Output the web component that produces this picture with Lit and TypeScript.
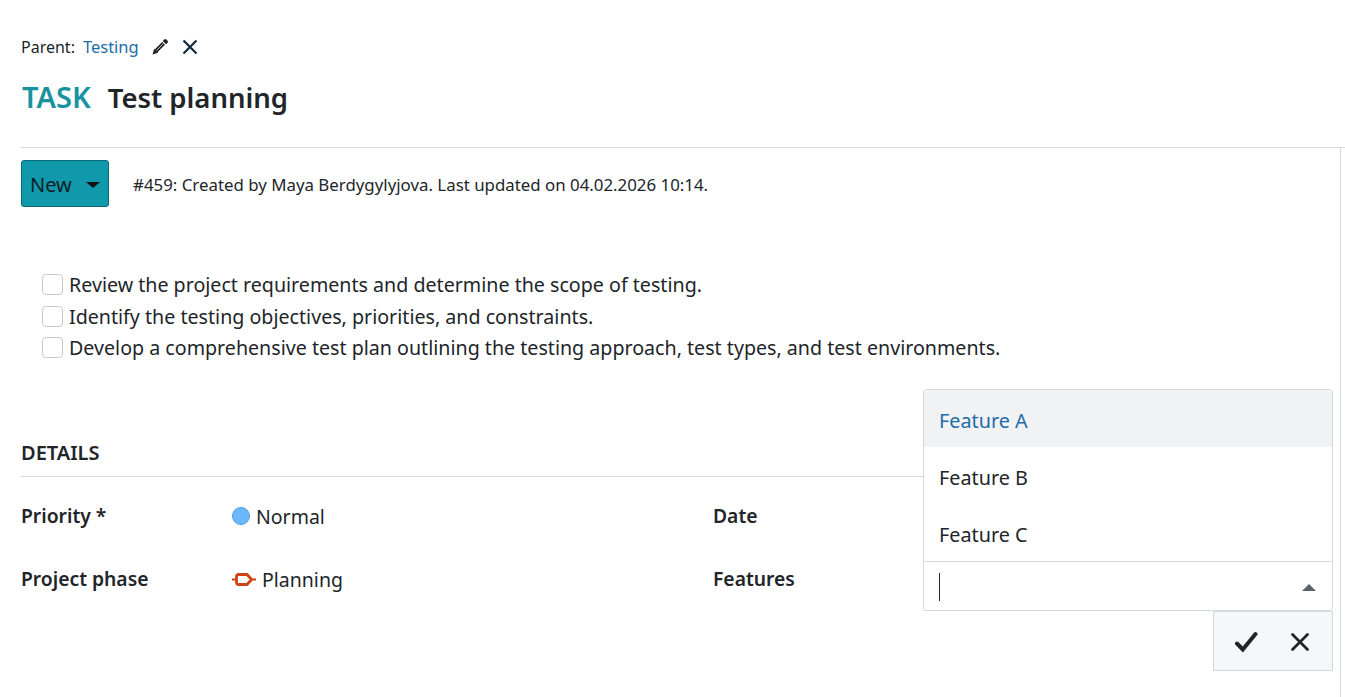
import { LitElement, css, html } from 'lit';
import { customElement } from 'lit/decorators.js';

const checklist = [
  'Review the project requirements and determine the scope of testing.',
  'Identify the testing objectives, priorities, and constraints.',
  'Develop a comprehensive test plan outlining the testing approach, test types, and test environments.',
];

const features = ['Feature A', 'Feature B', 'Feature C'];

@customElement('app-root')
export class AppRoot extends LitElement {
  render() {
    return html`
      <div class="header">
        <div class="parent">
          <span>Parent:</span>
          <a class="link">Testing</a>
          <svg class="pencil" viewBox="0 0 16 16" width="16" height="16">
            <path d="M12.200.5a1.500 1.500 0 0 1 2.100 0l1.200 1.200a1.500 1.500 0 0 1 0 2.100l-1.500 1.500-3.300-3.300zM9.900 2.800l3.300 3.300-8 8-4.700 1.400 1.400-4.700z" fill="#212529"/>
            <path d="M3 9.900 9.900 3M4.500 11.500 11.400 4.600M6 13 12.900 6.100" stroke="#e8eef4" stroke-width=".8" fill="none"/>
          </svg>
          <svg class="close" viewBox="0 0 16 16" width="16" height="16">
            <path d="M1.500 1.500 14.500 14.500M14.500 1.500 1.500 14.500" stroke="#0f2a3f" stroke-width="2.200" fill="none"/>
          </svg>
        </div>
        <h1><span class="type">TASK</span><span class="subject">Test planning</span></h1>
      </div>
      <div class="body">
        <div class="meta">
          <button class="status"><span class="status-text">New</span><span class="caret"></span></button>
          <span class="info">#459: Created by Maya Berdygylyjova. Last updated on 04.02.2026 10:14.</span>
        </div>
        <ul class="checklist">
          ${checklist.map((item) => html`<li><span class="box"></span>${item}</li>`)}
        </ul>
        <h2>DETAILS</h2>
        <div class="fields">
          <div class="label">Priority *</div>
          <div class="value">
            <span class="dot"></span>Normal
          </div>
          <div class="label">Date</div>
          <div></div>
          <div class="label">Project phase</div>
          <div class="value">
            <svg class="phase" viewBox="0 0 24 13" width="24" height="13">
              <path d="M0 6.500h4M20 6.500h4" stroke="#cf4113" stroke-width="2.200" fill="none"/>
              <path d="M6.500 1.500h8.500l4.500 5-4.500 5H6.500a2 2 0 0 1-2-2v-6a2 2 0 0 1 2-2z" stroke="#cf4113" stroke-width="2.800" fill="none" stroke-linejoin="round"/>
            </svg>
            Planning
          </div>
          <div class="label">Features</div>
          <div class="editor">
            <div class="menu">
              ${features.map(
                (f, i) => html`<div class="option ${i === 0 ? 'active' : ''}">${f}</div>`
              )}
            </div>
            <div class="input">
              <span class="cursor"></span>
              <span class="arrow"></span>
            </div>
            <div class="actions">
              <svg viewBox="0 0 24 22" width="24" height="22">
                <path d="M3 12.500 8.800 18.500 21.500 3" stroke="#212529" stroke-width="4" stroke-linecap="round" fill="none"/>
              </svg>
              <svg viewBox="0 0 20 20" width="20" height="20">
                <path d="M2.500 2.500 17.500 17.500M17.500 2.500 2.500 17.500" stroke="#212529" stroke-width="2.800" stroke-linecap="round" fill="none"/>
              </svg>
            </div>
          </div>
        </div>
      </div>
    `;
  }

  static styles = css`
    :host {
      display: block;
      height: 697px;
      overflow: hidden;
      box-sizing: border-box;
      padding-left: 21px;
      font-family: 'Noto Sans', sans-serif;
      color: #212529;
      background: #fff;
    }

    .header {
      height: 148px;
      box-sizing: border-box;
      padding-top: 36px;
      border-bottom: 1px solid #d1dae1;
    }

    .parent {
      display: flex;
      align-items: center;
      height: 22px;
      font-size: 16px;
    }

    .link {
      margin-left: 8px;
      margin-bottom: 1px;
      color: #1c6ca8;
      font-size: 16.500px;
    }

    .pencil {
      margin-left: 13px;
    }

    .close {
      margin-left: 14px;
    }

    h1 {
      display: flex;
      align-items: baseline;
      margin: 20px 0 0;
      line-height: 38px;
      font-weight: 600;
    }

    .type {
      color: #17929f;
      font-size: 29px;
      font-weight: 600;
      margin-left: 1px;
      margin-right: 17px;
    }

    .subject {
      font-size: 27.500px;
    }

    .body {
      height: 549px;
      box-sizing: border-box;
      padding: 12px 0 0;
      margin-right: 4px;
      border-right: 1px solid #d1dae1;
    }

    .meta {
      display: flex;
      align-items: center;
    }

    .status {
      display: flex;
      align-items: center;
      width: 88px;
      height: 47px;
      box-sizing: border-box;
      padding: 0 0 0 8px;
      border: 1px solid #0c6874;
      border-radius: 3px;
      background: #0f99aa;
      color: #102027;
      font: inherit;
      font-size: 20px;
    }

    .status-text {
      padding-top: 2px;
    }

    .caret {
      margin-left: 14px;
      margin-top: 3px;
      border-style: solid;
      border-width: 6px 7.500px 0;
      border-color: #111 transparent transparent;
    }

    .info {
      margin-left: 24px;
      padding-top: 1px;
      font-size: 16.850px;
    }

    .checklist {
      list-style: none;
      margin: 62px 0 0;
      padding: 0 0 0 21px;
      font-size: 19.650px;
    }

    .checklist li {
      display: flex;
      align-items: center;
      height: 31.500px;
      white-space: nowrap;
    }

    .box {
      width: 21px;
      height: 21px;
      box-sizing: border-box;
      margin-right: 6px;
      border: 1px solid #c9c9c9;
      border-radius: 4px;
      background: #fff;
    }

    h2 {
      margin: 75px 7px 0 0;
      height: 38px;
      box-sizing: border-box;
      font-size: 20px;
      line-height: 28px;
      font-weight: 600;
      border-bottom: 1px solid #d1dae1;
    }

    .fields {
      display: grid;
      grid-template-columns: 211px 481px 210px 410px;
      grid-auto-rows: 63px;
      align-items: center;
      margin-top: 7px;
      font-size: 19.500px;
    }

    .label {
      font-weight: 600;
      font-size: 19.300px;
    }

    .value {
      display: flex;
      align-items: center;
      padding-top: 2px;
    }

    .dot {
      width: 18px;
      height: 18px;
      box-sizing: border-box;
      margin-right: 6px;
      border: 1px solid #4a9fe8;
      border-radius: 50%;
      background: #6cb8fb;
    }

    .phase {
      margin-right: 6px;
    }

    .editor {
      position: relative;
      align-self: start;
      height: 50px;
      margin-top: 14px;
      font-size: 19.800px;
    }

    .input {
      display: flex;
      align-items: center;
      justify-content: space-between;
      height: 50px;
      box-sizing: border-box;
      padding: 2px 16px 0 15px;
      border: 1px solid #d1dae1;
      border-radius: 0 0 3px 3px;
      background: #fff;
    }

    .cursor {
      width: 1px;
      height: 28px;
      background: #212529;
    }

    .arrow {
      margin-top: 2px;
      border-style: solid;
      border-width: 0 7px 7px;
      border-color: transparent transparent #59636e;
    }

    .menu {
      position: absolute;
      left: 0;
      right: 0;
      bottom: 50px;
      box-sizing: border-box;
      border: 1px solid #d1dae1;
      border-bottom: 0;
      border-radius: 4px 4px 0 0;
      background: #fff;
    }

    .option {
      height: 57px;
      box-sizing: border-box;
      padding: 2px 0 0 15px;
      line-height: 57px;
    }

    .option.active {
      background: #f1f2f4;
      color: #1c6ca8;
    }

    .actions {
      position: absolute;
      right: 0;
      top: 50px;
      display: flex;
      align-items: center;
      gap: 32px;
      width: 120px;
      height: 60px;
      box-sizing: border-box;
      padding: 2px 0 0 20px;
      border: 1px solid #d1dae1;
      background: #f6f7f9;
    }
  `;
}

declare global {
  interface HTMLElementTagNameMap {
    'app-root': AppRoot;
  }
}
